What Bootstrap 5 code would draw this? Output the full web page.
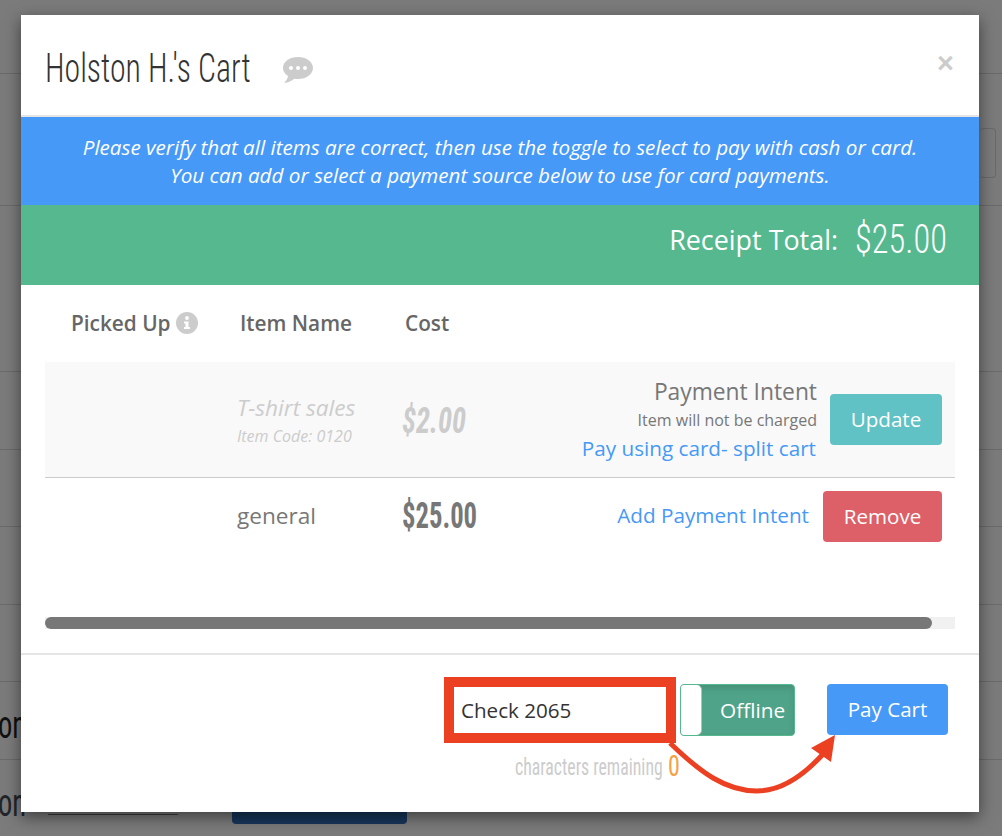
<!doctype html>
<html lang="en">
<head>
<meta charset="utf-8">
<title>Cart</title>
<link href="https://cdn.jsdelivr.net/npm/bootstrap@5.3.0/dist/css/bootstrap.min.css" rel="stylesheet">
<style>
html,body{height:836px;overflow:hidden}
body{background:#7b7b7b;font-family:"Open Sans","Noto Sans",sans-serif;position:relative}
.bgrow{border-bottom:1px solid #6a6a6a;height:77.5px;color:#111}
.bgrow-first{height:74px}
.bgrow-second{height:132px}
.bgrow-third{height:166px}
.cond{font-family:"Roboto Condensed",Roboto,"Liberation Sans",sans-serif}
.squeeze{display:inline-block;transform-origin:left center;white-space:nowrap}
.bgword{font-size:38px;line-height:1;padding-top:24px}
.bgword .squeeze{transform:scaleX(.75);margin-left:-2px}
.bginput{position:absolute;left:980px;top:128px;width:16px;height:50px;border:1px solid #6a6a6a;border-radius:4px;border-left:0}
.bgline{position:absolute;left:48px;top:814px;width:130px;height:1px;background:#3e3e3e}
.bgbtn{position:absolute;left:232px;top:800px;width:175px;height:24px;background:#17365a;border-radius:4px}
.cart{position:absolute;left:21px;top:15px;width:958px;height:797px;background:#fff;border:0;border-radius:0;box-shadow:0 5px 15px rgba(0,0,0,.5);color:#777}
.cart .modal-header{height:102px;padding:0 24px;border-bottom:2px solid #e5e5e5;border-radius:0;align-items:flex-start}
.cart-title{font-size:41px;font-weight:300;color:#333;line-height:1;margin:33px 0 0;width:205px}
.cart-title .squeeze{transform:scaleX(.775)}
.chat{margin:41px 0 0 32px}
.closex{color:#ccc;font-size:29px;line-height:1;margin:34px 1px 0 auto;background:none;border:0;padding:0;font-family:"Liberation Sans",sans-serif;font-weight:700}
.bluebar{background:#4699f7;color:#fff;font-style:italic;font-size:20.65px;line-height:28px;height:88px;padding-top:16px;text-align:center}
.greenbar{background:#55b88f;color:#fff;height:80px;padding:0 33px 10px 0}
.greenbar .lab{font-size:26.9px}
.amt{font-size:41px;font-weight:300;margin-left:17px;width:91px}
.amt .squeeze{transform:scaleX(.84)}
.cols{height:77px;padding:0 24px;font-weight:600;font-size:20.8px;color:#666}
.c1{width:191px;flex:none}
.c2{width:165px;flex:none}
.c3{width:130px;flex:none}
.pick{padding-left:26px}
.infoi{margin-left:5px;vertical-align:-3px}
.rows{margin:0 24px}
.rowa{background:#f9f9f9;height:116px;border-bottom:1px solid #ccc;padding-right:13px}
.rowb{height:76px;padding-right:13px}
.nm{font-size:22.6px;line-height:28px;color:#ccc;font-style:italic;padding-top:5px}
.code{font-size:16px;line-height:28px;color:#ccc;font-style:italic}
.c-name{margin-left:192px;width:165px;flex:none}
.price{font-size:36px;font-weight:700;color:#ccc;font-style:italic;margin-top:3px;width:63px}
.price .squeeze{transform:scaleX(.79)}
.price2{font-size:36px;font-weight:700;color:#777;width:75px}
.price2 .squeeze{transform:scaleX(.74)}
.plain{font-size:22.6px;color:#777}
.intent{text-align:right;line-height:28px}
.intent .t1{font-size:22.8px;color:#777;margin-right:-1px}
.intent .t2{font-size:16px;color:#777;margin-right:-1px}
.lnk{color:#4699f7;font-size:20.7px;text-decoration:none}
.intent .lnk{display:block}
.act{color:#fff;font-size:20.6px;height:51px;border-radius:4px;border:0;display:flex;align-items:center;justify-content:center;padding:0;text-decoration:none}
.upd{background:#60c2c4;width:112px;margin-left:14px}
.rem{background:#dd5f68;width:119px;margin-left:14px}
.track{margin:63px 24px 0;height:12px;background:#f1f1f1}
.thumb{height:12px;width:887px;background:#777;border-radius:6px}
.cart .modal-footer{position:absolute;left:0;right:0;top:638px;height:159px;border-top:2px solid #e5e5e5;border-radius:0;padding:0;display:block}
.note{position:absolute;left:433px;top:31px;width:212px;height:48px;border:0;outline:none;padding:0 7px;font-size:20.6px;color:#333;background:#fff}
.redbox{position:absolute;left:423px;top:22px;width:232px;height:66px;border:10px solid #ec4023;pointer-events:none}
.tog{position:absolute;left:659px;top:29px;width:115px;height:52px;background:#4fa388;border:1px solid #55b88f;border-radius:4px;color:#fff;font-size:20.8px;padding-left:39px;padding-top:2px;box-shadow:inset 0 4px 6px rgba(0,0,0,.1)}
.knob{position:absolute;left:0;top:0;bottom:0;width:21px;background:#fff;border-radius:3px 5px 5px 3px;border-right:1px solid #bbb}
.pay{background:#4699f7;width:121px;position:absolute;left:806px;top:29px;height:51px}
.remain{position:absolute;left:494px;top:94px;color:#ccc;font-size:24px;white-space:nowrap;line-height:34px;height:34px}
.remain .squeeze{transform:scaleX(.74);width:148px}
.remain .left0{color:#f4a244;font-size:30px;margin-left:5px;width:13px;transform:scaleX(.8);vertical-align:-1px}
.arrow{position:absolute;left:0;top:0;pointer-events:none}
</style>
</head>
<body>
<div class="bgrow bgrow-first"></div>
<div class="bgrow bgrow-second"></div>
<div class="bgrow bgrow-third"></div>
<div class="bgrow"></div>
<div class="bgrow"></div>
<div class="bgrow"></div>
<div class="bgrow"></div>
<div class="bgrow cond bgword"><span class="squeeze">on</span></div>
<div class="cond bgword"><span class="squeeze">on</span></div>
<div class="bginput"></div>
<div class="bgline"></div>
<div class="bgbtn"></div>

<div class="modal-content cart">
  <div class="modal-header">
    <h4 class="cart-title cond"><span class="squeeze">Holston H.'s Cart</span></h4>
    <svg class="chat" width="32" height="28" viewBox="0 0 32 28"><path fill="#ccc" d="M16 1C7.700 1 1 5.600 1 12c0 3.400 2 6.200 5 8.100C5.700 22.500 4.500 25 2 27c4.500-.5 8-2.500 10.500-4.300 1.100.2 2.300.3 3.500.3 8.300 0 15-4.900 15-11S24.300 1 16 1z"/><circle cx="9" cy="12" r="2" fill="#fff"/><circle cx="16" cy="12" r="2" fill="#fff"/><circle cx="23" cy="12" r="2" fill="#fff"/></svg>
    <button class="closex" type="button">×</button>
  </div>
  <div class="bluebar">Please verify that all items are correct, then use the toggle to select to pay with cash or card.<br>You can add or select a payment source below to use for card payments.</div>
  <div class="greenbar d-flex align-items-center justify-content-end"><span class="lab">Receipt Total:</span><span class="amt cond"><span class="squeeze">$25.00</span></span></div>
  <div class="cols d-flex align-items-center">
    <div class="c1 pick">Picked Up<svg class="infoi" width="22" height="22" viewBox="0 0 22 22"><circle cx="11" cy="11" r="11" fill="#ccc"/><circle cx="11" cy="6" r="1.900" fill="#fff"/><path fill="#fff" d="M8 9.500h4.500V15H14v2H8v-2h1.500v-3.500H8z"/></svg></div>
    <div class="c2 ps-1">Item Name</div>
    <div class="c3 ps-1">Cost</div>
  </div>
  <div class="rows">
    <div class="rowa d-flex align-items-center">
      <div class="c-name"><div class="nm">T-shirt sales</div><div class="code">Item Code: 0120</div></div>
      <div class="price cond"><span class="squeeze">$2.00</span></div>
      <div class="ms-auto intent"><div class="t1">Payment Intent</div><div class="t2">Item will not be charged</div><a class="lnk" href="#">Pay using card- split cart</a></div>
      <a class="act upd" href="#" role="button">Update</a>
    </div>
    <div class="rowb d-flex align-items-center">
      <div class="c-name plain">general</div>
      <div class="price2 cond"><span class="squeeze">$25.00</span></div>
      <a class="lnk ms-auto" href="#">Add Payment Intent</a>
      <a class="act rem" href="#" role="button">Remove</a>
    </div>
  </div>
  <div class="track"><div class="thumb"></div></div>
  <div class="modal-footer">
    <input class="note" type="text" value="Check 2065" aria-label="Note">
    <div class="tog d-flex align-items-center"><span class="knob"></span>Offline</div>
    <a class="act pay" href="#" role="button">Pay Cart</a>
    <div class="remain cond"><span class="squeeze">characters remaining</span><span class="squeeze left0">0</span></div>
    <div class="redbox"></div>
    <svg class="arrow" width="958" height="159" viewBox="0 0 958 159"><path d="M649 88C680 118 705 136 736 136C762 136 785 118 803 98" fill="none" stroke="#ec4023" stroke-width="5"/><path fill="#ec4023" d="M814 80L790 93L810 107z"/></svg>
  </div>
</div>
</body>
</html>
